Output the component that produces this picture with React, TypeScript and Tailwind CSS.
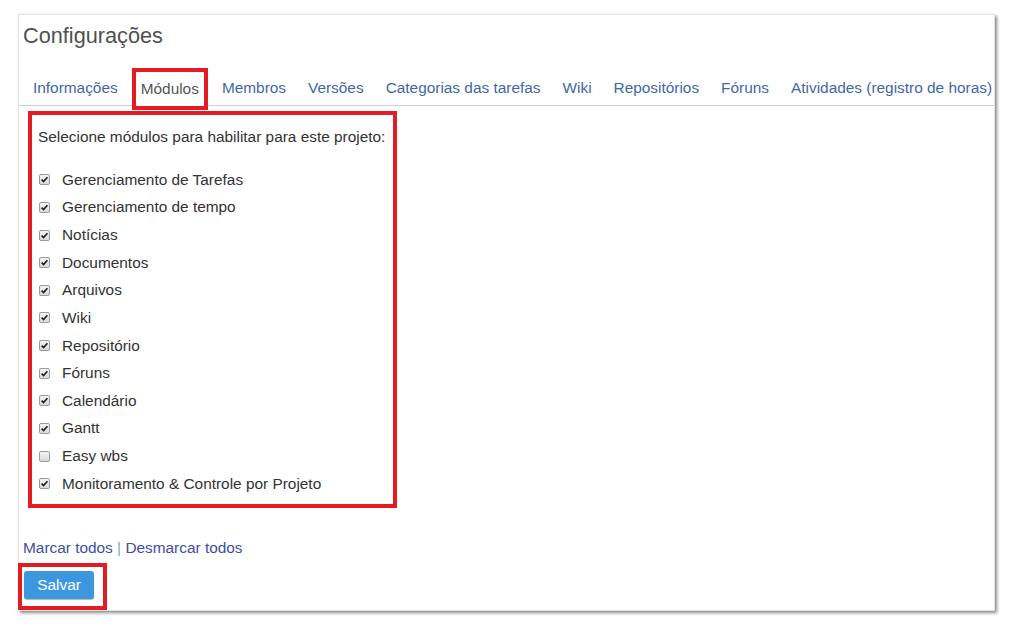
const tabs = [
  "Informações",
  "Módulos",
  "Membros",
  "Versões",
  "Categorias das tarefas",
  "Wiki",
  "Repositórios",
  "Fóruns",
  "Atividades (registro de horas)",
];

const modules = [
  { name: "Gerenciamento de Tarefas", on: true },
  { name: "Gerenciamento de tempo", on: true },
  { name: "Notícias", on: true },
  { name: "Documentos", on: true },
  { name: "Arquivos", on: true },
  { name: "Wiki", on: true },
  { name: "Repositório", on: true },
  { name: "Fóruns", on: true },
  { name: "Calendário", on: true },
  { name: "Gantt", on: true },
  { name: "Easy wbs", on: false },
  { name: "Monitoramento & Controle por Projeto", on: true },
];

const CheckBox = ({ checked }: { checked: boolean }) => (
  <span className="flex h-[11px] w-[11px] shrink-0 items-center justify-center rounded-[2px] border border-[#9a9a9a] bg-gradient-to-b from-[#f4f4f4] to-[#dadada]">
    {checked && (
      <svg width="9" height="9" viewBox="0 0 9 9">
        <path d="M1.6 4.6 L3.6 6.6 L7.4 2.2" fill="none" stroke="#222" strokeWidth="1.7" />
      </svg>
    )}
  </span>
);

const App = () => {
  return (
    <div className="h-[641px] w-full bg-white pl-[18px] pt-[14px] font-['Liberation_Sans',Arial,sans-serif] text-[15.4px]">
      <div className="flex h-[597px] w-[977px] flex-col border border-[#e2e2e2] bg-white shadow-[2px_2px_3px_rgba(0,0,0,0.45)]">
        <h2 className="pl-[4px] pt-[9px] text-[21.7px] leading-[24px] text-[#505050]">Configurações</h2>

        <div className="mt-[19px] flex h-[39px] items-end border-b border-[#cfcfcf] pl-[3px]">
          {tabs.map((t) =>
            t === "Módulos" ? (
              <div
                key={t}
                className="relative -mb-[5px] mx-[3px] flex h-[42px] items-center border-4 border-[#e31b23] bg-white px-[5px] leading-[18px] text-[#555]"
              >
                {t}
              </div>
            ) : (
              <a
                key={t}
                className="flex h-[34px] items-center whitespace-nowrap px-[11px] leading-[18px] text-[#3f68a8]"
              >
                {t}
              </a>
            )
          )}
        </div>

        <div className="ml-[9px] mt-[5px] w-[369px] border-4 border-[#e31b23] pb-[6px] pl-[6px] pt-[13px] text-[#333]">
          <p className="leading-[18px]">Selecione módulos para habilitar para este projeto:</p>
          <div className="mt-[20px] flex flex-col">
            {modules.map((m) => (
              <label key={m.name} className="flex h-[27.64px] items-center gap-[12px] pl-[1px] leading-[18px]">
                <CheckBox checked={m.on} />
                <span>{m.name}</span>
              </label>
            ))}
          </div>
        </div>

        <p className="ml-[4px] mt-[31px] leading-[18px]">
          <a className="text-[#3d4ea3]">Marcar todos</a>
          <span className="text-[#8fa3c0]"> | </span>
          <a className="text-[#3d4ea3]">Desmarcar todos</a>
        </p>

        <div className="-ml-[1px] mt-[6px] w-[89px] border-4 border-[#e31b23] pb-[7px] pl-[2px] pt-[4px]">
          <button className="h-[28px] w-[70px] rounded-[3px] bg-[#3d97e0] text-[15.4px] text-white shadow-[0_1px_1px_rgba(0,0,0,0.3)]">
            Salvar
          </button>
        </div>
      </div>
    </div>
  );
};

export default App;
